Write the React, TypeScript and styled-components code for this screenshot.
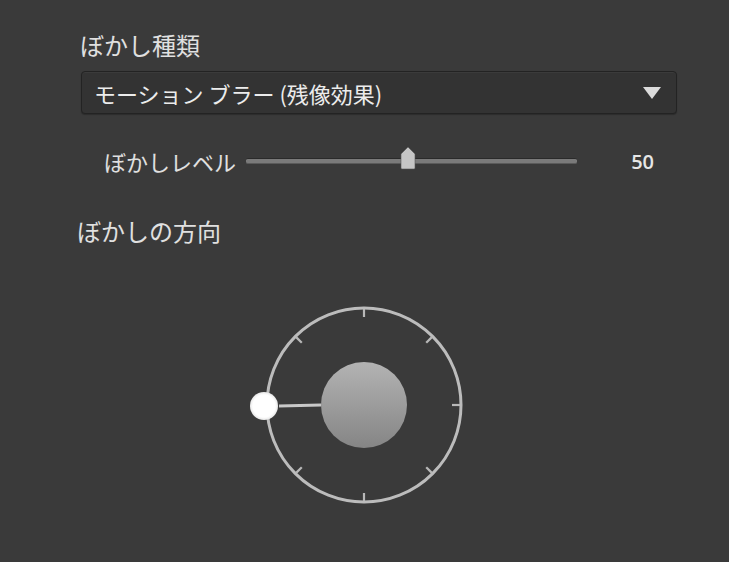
import { createGlobalStyle } from 'styled-components'
import styled from 'styled-components'

const GlobalStyle = createGlobalStyle`
  html, body {
    margin: 0;
    padding: 0;
    background: #3a3a3a;
  }
  body {
    font-family: "Noto Sans CJK JP", "Noto Sans", sans-serif;
    color: #e2e2e2;
  }
`

const Panel = styled.div`
  width: 729px;
  height: 562px;
  box-sizing: border-box;
  padding: 31px 52px 0 80px;
  display: flex;
  flex-direction: column;
  background: #3a3a3a;
`

const SectionTitle = styled.div<{ $shift?: number; $gap?: number }>`
  font-size: 24px;
  line-height: 28px;
  color: #e0e0e0;
  margin-left: ${(p) => p.$shift ?? 0}px;
  margin-top: ${(p) => p.$gap ?? 0}px;
`

const Select = styled.div`
  margin-top: 12px;
  height: 43px;
  box-sizing: border-box;
  margin-left: 1px;
  display: flex;
  align-items: center;
  justify-content: space-between;
  padding: 0 15px 0 12px;
  background: #333333;
  border: 1px solid #232323;
  border-radius: 4px;
  box-shadow: inset 0 1px 0 rgba(255, 255, 255, 0.04), 0 1px 1px rgba(0, 0, 0, 0.25);
  font-size: 22px;
  color: #ececec;
`

const Arrow = styled.span`
  width: 0;
  height: 0;
  border-left: 9px solid transparent;
  border-right: 9px solid transparent;
  border-top: 12px solid #dcdcdc;
`

const SliderRow = styled.div`
  margin-top: 33px;
  height: 28px;
  display: flex;
  align-items: center;
  padding-left: 24px;
`

const SliderLabel = styled.span`
  font-size: 22px;
  color: #e0e0e0;
  width: 142px;
  flex: none;
`

const Track = styled.div`
  position: relative;
  width: 331px;
  height: 4px;
  border-radius: 2px;
  background: #7a7a7a;
  border-top: 1px solid #2a2a2a;
  border-bottom: 1px solid #5a5a5a;
`

const Thumb = styled.svg`
  position: absolute;
  top: -13px;
  margin-left: -8px;
`

const Value = styled.span`
  margin-left: auto;
  margin-right: 23px;
  font-family: "Open Sans", "Liberation Sans", sans-serif;
  font-weight: 600;
  font-size: 20px;
  color: #e6e6e6;
`

const DialWrap = styled.div`
  margin-top: 55px;
  display: flex;
  justify-content: center;
  margin-left: -30px;
`

// tick angles, clockwise from the top; the left one sits under the knob
const ticks = [0, 45, 90, 135, 180, 225, 315]

function Dial() {
  const cx = 115
  const cy = 105
  const r = 97
  return (
    <svg width="230" height="210" viewBox="0 0 230 210">
      <defs>
        <linearGradient id="hub" x1="0" y1="0" x2="0" y2="1">
          <stop offset="0" stopColor="#b3b3b3" />
          <stop offset="1" stopColor="#858585" />
        </linearGradient>
        <radialGradient id="knob" cx="0.5" cy="0.5" r="0.5">
          <stop offset="0.8" stopColor="#ffffff" />
          <stop offset="1" stopColor="#e8e8e8" />
        </radialGradient>
      </defs>
      <circle cx={cx} cy={cy} r={r} fill="none" stroke="#bcbcbc" strokeWidth="3" />
      {ticks.map((a) => {
        const rad = ((a - 90) * Math.PI) / 180
        const x1 = cx + Math.cos(rad) * (r - 1)
        const y1 = cy + Math.sin(rad) * (r - 1)
        const x2 = cx + Math.cos(rad) * (r - 9)
        const y2 = cy + Math.sin(rad) * (r - 9)
        return <line key={a} x1={x1} y1={y1} x2={x2} y2={y2} stroke="#b8b8b8" strokeWidth="2.2" />
      })}
      <line x1={cx - 85} y1={cy + 1} x2={cx - 43} y2={cy} stroke="#c8c8c8" strokeWidth="3" />
      <circle cx={cx} cy={cy} r="43" fill="url(#hub)" />
      <circle cx={cx - 100} cy={cy + 1} r="14" fill="url(#knob)" />
    </svg>
  )
}

export default function App() {
  const level = 50
  return (
    <>
      <GlobalStyle />
      <Panel>
        <SectionTitle>ぼかし種類</SectionTitle>
        <Select>
          <span>モーション ブラー (残像効果)</span>
          <Arrow />
        </Select>
        <SliderRow>
          <SliderLabel>ぼかしレベル</SliderLabel>
          <Track>
            <Thumb width="16" height="24" viewBox="0 0 16 24" style={{ left: `${level * 0.98}%` }}>
              <path d="M8 1 L15 8 L15 22 Q15 23 14 23 L2 23 Q1 23 1 22 L1 8 Z" fill="#c6c6c6" stroke="#555" strokeWidth="0.6" />
            </Thumb>
          </Track>
          <Value>{level}</Value>
        </SliderRow>
        <SectionTitle $shift={-3} $gap={42}>
          ぼかしの方向
        </SectionTitle>
        <DialWrap>
          <Dial />
        </DialWrap>
      </Panel>
    </>
  )
}
